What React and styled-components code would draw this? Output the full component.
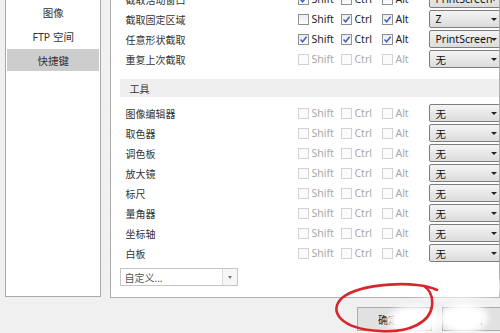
import React from 'react';
import styled, { createGlobalStyle } from 'styled-components';

const GlobalStyle = createGlobalStyle`
  html, body {
    margin: 0;
    padding: 0;
    background: #f0f0f0;
  }
  body {
    font-family: "Noto Sans", "Noto Sans CJK SC", sans-serif;
  }
`

const Window = styled.div`
  position: relative;
  width: 500px;
  height: 333px;
  overflow: hidden;
  background: #f0f0f0;
  font-size: 10.5px;
  color: #222;
`

const Body = styled.div`
  display: flex;
  align-items: flex-start;
  height: 298px;
  padding-left: 5px;
`

const Sidebar = styled.div`
  width: 99px;
  height: 297px;
  box-sizing: border-box;
  background: #fff;
  border: 1px solid #a9a9a9;
  border-top: none;
  padding: 1px 1px 0;
  display: flex;
  flex-direction: column;
  gap: 2px;
`

const NavItem = styled.div`
  height: 22px;
  display: flex;
  align-items: center;
  justify-content: center;
  font-size: 10.5px;
  color: #333;
  background: ${p => (p.$active ? '#cdcdcd' : 'transparent')};
`

const Panel = styled.div`
  margin-left: 9px;
  width: 400px;
  height: 298px;
  box-sizing: border-box;
  background: #fff;
  border: 1px solid #adadad;
  border-top: none;
  overflow: hidden;
  padding-left: 9px;
`

const Content = styled.div`
  margin-top: -11px;
  display: flex;
  flex-direction: column;
`

const Row = styled.div`
  display: grid;
  grid-template-columns: 178px 43px 41px 47px 76px;
  align-items: center;
  height: 20px;
`

const Label = styled.span`
  padding-left: 5px;
  font-size: 10px;
  color: #333;
`

const Check = styled.span`
  display: flex;
  align-items: center;
  gap: 2px;
  color: ${p => (p.$disabled ? '#a8a8a8' : '#222')};
`

const Box = styled.span`
  width: 11px;
  height: 11px;
  box-sizing: border-box;
  border: 1px solid ${p => (p.$disabled ? '#d2d2d2' : '#8e8f8f')};
  background: ${p => (p.$disabled ? '#fbfbfb' : 'linear-gradient(#ececec, #fdfdfd)')};
  display: flex;
  align-items: center;
  justify-content: center;
`

const Select = styled.span`
  position: relative;
  height: 18px;
  box-sizing: border-box;
  border: 1px solid #7d7d7d;
  border-radius: 2px;
  background: linear-gradient(#f4f4f4, #dcdcdc);
  display: flex;
  align-items: center;
  padding-left: 5px;
  color: #111;
  &::after {
    content: '';
    position: absolute;
    right: 7px;
    top: 7px;
    border-left: 3px solid transparent;
    border-right: 3px solid transparent;
    border-top: 3px solid #222;
  }
`

const Section = styled.div`
  margin: 10px 0 6px;
  height: 18px;
  background: #efefef;
  display: flex;
  align-items: center;
  padding-left: 9px;
  font-size: 10px;
  color: #333;
`

const Combo = styled.div`
  margin-top: 5px;
  width: 118px;
  height: 18px;
  box-sizing: border-box;
  border: 1px solid #c6c6c6;
  background: #fff;
  display: flex;
  align-items: stretch;
`

const ComboText = styled.span`
  flex: 1;
  display: flex;
  align-items: center;
  padding-left: 3px;
  font-size: 10px;
  color: #555;
`

const ComboButton = styled.span`
  width: 14px;
  border-left: 1px solid #dadada;
  background: #f6f6f6;
  display: flex;
  align-items: center;
  justify-content: center;
  &::after {
    content: '';
    border-left: 2.5px solid transparent;
    border-right: 2.5px solid transparent;
    border-top: 3px solid #777;
  }
`

const Footer = styled.div`
  display: flex;
  gap: 10px;
  padding: 9px 0 0 357px;
`

const Button = styled.div`
  width: 75px;
  height: 24px;
  flex-shrink: 0;
  box-sizing: border-box;
  border: 1px solid #adadad;
  background: #e1e1e1;
  display: flex;
  align-items: center;
  padding-left: 20px;
  font-size: 10px;
  color: #222;
`

const Smudge = styled.div`
  position: absolute;
  left: ${p => p.$x}px;
  top: ${p => p.$y}px;
  width: ${p => p.$w}px;
  height: ${p => p.$h}px;
  border-radius: 50%;
  background: #fff;
  filter: blur(3px);
`

const Annotation = styled.svg`
  position: absolute;
  left: 0;
  top: 0;
  pointer-events: none;
`

const CheckMark = () => (
  <svg width="9" height="9" viewBox="0 0 9 9">
    <path d="M1.5 4.6 L3.6 6.8 L7.6 1.8" fill="none" stroke="#3b5fc4" strokeWidth="1.5" />
  </svg>
)

const CheckItem = ({ text, checked, disabled }) => (
  <Check $disabled={disabled}>
    <Box $disabled={disabled}>{checked && <CheckMark />}</Box>
    {text}
  </Check>
)

const ShortcutRow = ({ label, keys, value, disabled }) => (
  <Row>
    <Label>{label}</Label>
    <CheckItem text="Shift" checked={keys.includes('s')} disabled={disabled} />
    <CheckItem text="Ctrl" checked={keys.includes('c')} disabled={disabled} />
    <CheckItem text="Alt" checked={keys.includes('a')} disabled={disabled} />
    <Select>{value}</Select>
  </Row>
)

const capture = [
  { label: '截取活动窗口', keys: 's', value: 'PrintScreen' },
  { label: '截取固定区域', keys: 'ca', value: 'Z' },
  { label: '任意形状截取', keys: 'sca', value: 'PrintScreen' },
  { label: '重复上次截取', keys: '', value: '无', disabled: true },
]

const tools = ['图像编辑器', '取色器', '调色板', '放大镜', '标尺', '量角器', '坐标轴', '白板']

const App = () => (
  <Window>
    <GlobalStyle />
    <Body>
      <Sidebar>
        <NavItem>图像</NavItem>
        <NavItem>FTP 空间</NavItem>
        <NavItem $active>快捷键</NavItem>
      </Sidebar>
      <Panel>
        <Content>
          {capture.map(r => (
            <ShortcutRow key={r.label} {...r} />
          ))}
          <Section>工具</Section>
          {tools.map(t => (
            <ShortcutRow key={t} label={t} keys="" value="无" disabled />
          ))}
          <Combo>
            <ComboText>自定义...</ComboText>
            <ComboButton />
          </Combo>
        </Content>
      </Panel>
    </Body>
    <Footer>
      <Button>确定</Button>
      <Button>取消</Button>
    </Footer>
    <Smudge $x={405} $y={276} $w={100} $h={22} />
    <Smudge $x={388} $y={306} $w={52} $h={28} />
    <Smudge $x={440} $y={303} $w={48} $h={30} />
    <Annotation width="500" height="333">
      <path
        d="M437 290 C418 280 360 283 342 298 C328 311 340 329 380 331 C410 333 430 322 432 306 C433 297 430 290 424 286"
        fill="none"
        stroke="#d8262d"
        strokeWidth="2.6"
        strokeLinecap="round"
      />
    </Annotation>
  </Window>
)

export default App;
